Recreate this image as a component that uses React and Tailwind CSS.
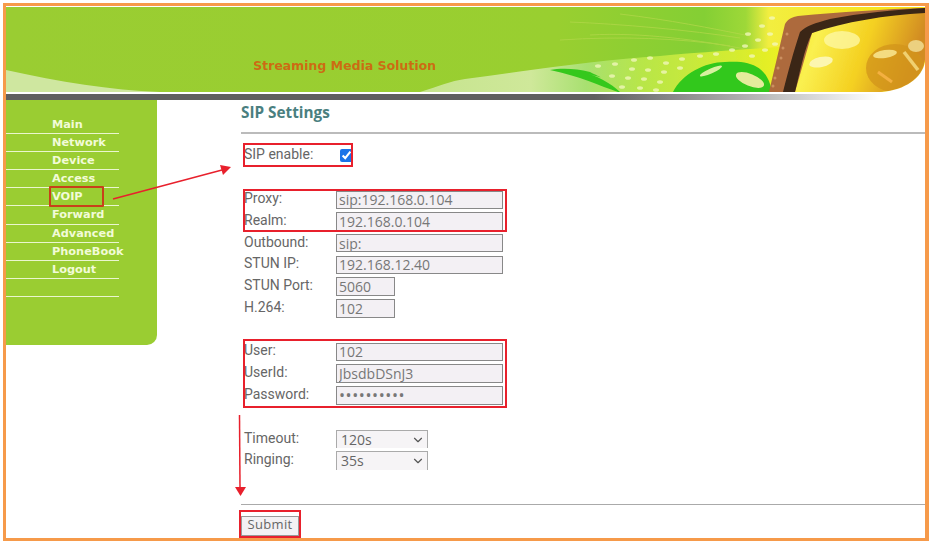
import React from 'react';
import { ChevronDown } from 'lucide-react';

const menuItems = ['Main', 'Network', 'Device', 'Access', 'VOIP', 'Forward', 'Advanced', 'PhoneBook', 'Logout', ''];

const Banner = () => (
  <svg viewBox="6 7 919 85" className="block w-[919px] h-[85px]">
    <defs>
      <linearGradient id="base" x1="0" x2="1" y1="0" y2="0">
        <stop offset="0" stopColor="#9acd32" />
        <stop offset="0.6" stopColor="#99cf30" />
        <stop offset="0.76" stopColor="#84cf34" />
        <stop offset="0.805" stopColor="#9ed838" />
        <stop offset="0.83" stopColor="#f2ee40" />
        <stop offset="1" stopColor="#f8e010" />
      </linearGradient>
      <linearGradient id="swoosh" gradientUnits="userSpaceOnUse" x1="420" x2="790" y1="0" y2="0">
        <stop offset="0" stopColor="#c6e48e" />
        <stop offset="0.3" stopColor="#cfe89a" />
        <stop offset="0.45" stopColor="#a8e070" />
        <stop offset="0.6" stopColor="#b8e648" />
        <stop offset="0.85" stopColor="#d4ec30" />
        <stop offset="1" stopColor="#f0f020" />
      </linearGradient>
      <linearGradient id="lens" x1="0" x2="1" y1="0" y2="0.2">
        <stop offset="0" stopColor="#f6e600" />
        <stop offset="0.3" stopColor="#faf050" />
        <stop offset="0.65" stopColor="#f4d020" />
        <stop offset="1" stopColor="#d28c24" />
      </linearGradient>
      <filter id="soft" x="-5%" y="-5%" width="110%" height="110%">
        <feGaussianBlur stdDeviation="0.7" />
      </filter>
    </defs>
    <rect x="6" y="7" width="919" height="85" fill="url(#base)" />
    <g filter="url(#soft)">
      <g fill="none" stroke="#b4d84c" strokeWidth="1" opacity="0.7">
        <path d="M570 22 C620 24 690 30 740 38" />
        <path d="M590 35 C640 32 700 40 750 50" />
        <path d="M560 40 C620 36 680 38 730 46" />
        <path d="M620 14 C670 20 710 28 750 36" />
      </g>
      {/* light swoosh under the title */}
      <path d="M6 70 C60 82 110 90 160 92 L6 92 Z" fill="#cfe7a0" />
      <path d="M420 92 C440 86 450 81 465 79 C530 70 600 60 660 56 C700 52 740 50 790 46 L790 92 Z" fill="url(#swoosh)" />
      <g fill="#f4f8c0" opacity="0.75">
        {[[598, 66], [615, 64], [634, 60], [650, 58], [666, 63], [682, 59], [700, 56], [716, 54], [632, 69], [648, 70], [664, 72], [680, 68], [612, 76], [628, 78], [644, 79], [660, 82], [640, 88], [622, 87], [656, 90], [732, 50], [745, 46], [758, 40], [770, 34], [752, 56], [765, 50], [762, 26], [772, 18], [748, 34], [775, 44]].map(([cx, cy]) => (
          <ellipse key={`${cx}-${cy}`} cx={cx} cy={cy} rx="3" ry="1.8" />
        ))}
      </g>
      {/* green drops */}
      <path d="M620 92 C612 84 595 74 580 72 C600 76 610 82 590 72 C575 68 560 68 550 70 C580 76 600 86 618 92 Z" fill="#34c81e" />
      <path d="M673 92 C682 74 705 62 725 62 C750 60 768 66 772 92 Z" fill="#30c81a" />
      <ellipse cx="711" cy="71" rx="12" ry="2.5" fill="#d8f0a0" transform="rotate(-24 711 71)" />
      <ellipse cx="750" cy="80" rx="15" ry="6" fill="#e4ec9c" transform="rotate(22 750 80)" />
    </g>
    {/* glasses */}
    <g filter="url(#soft)">
      <path d="M782 92 L805 30 C850 16 890 11 925 10 L925 60 C922 78 905 90 880 92 Z" fill="url(#lens)" />
      <path d="M769 92 L785 24 C788 19 792 17 798 16 C840 12 885 9 925 8 L925 11 C885 13 840 20 812 33 L795 92 Z" fill="#ad6a3c" />
      <path d="M783 92 C788 72 794 50 800 32 C806 26 815 23 830 19 C860 13 895 10 925 8 L925 13 C885 15 845 22 812 33 C804 50 800 72 795 92 Z" fill="#3a2618" />
      <g fill="#d9a070" opacity="0.7">
        {[[783, 48], [781, 58], [778, 68], [775, 78], [773, 86], [787, 34]].map(([cx, cy]) => (
          <circle key={`${cx}-${cy}`} cx={cx} cy={cy} r="1.5" />
        ))}
      </g>
      <ellipse cx="821" cy="62" rx="12" ry="5" fill="#fcf6b0" transform="rotate(-12 821 62)" />
      <ellipse cx="842" cy="40" rx="18" ry="9" fill="#fdf8a8" opacity="0.75" />
      <ellipse cx="895" cy="68" rx="29" ry="24" fill="#d2941e" opacity="0.75" />
      <ellipse cx="885" cy="54" rx="12" ry="4" fill="#f4dc80" transform="rotate(-8 885 54)" />
      <ellipse cx="916" cy="46" rx="8" ry="6" fill="#ecd080" />
      <path d="M904 52 L918 70" stroke="#f0d070" strokeWidth="3.5" />
      <path d="M878 72 L892 82" stroke="#f4b040" strokeWidth="3" />
    </g>
    <path d="M925 62 C922 78 905 90 882 92 L925 92 Z" fill="#ffffff" />
  </svg>
);

const Row = ({ label, value, type = 'text', short = false }) => (
  <div className="flex items-center h-[21.7px] pl-[3px]">
    <span className="w-[92px] pb-[2px] text-[14px] text-[#666] font-['Roboto',sans-serif]">{label}</span>
    <input
      type={type}
      readOnly
      value={value}
      className={`${short ? 'w-[59px]' : 'w-[167px]'} h-[18.5px] border border-[#888] bg-[#f3f0f4] px-[2px] ${type === 'password' ? 'text-[16px] tracking-[0.6px]' : 'text-[14px]'} text-[#777] font-['Open_Sans',sans-serif]`}
    />
  </div>
);

const SelectRow = ({ label, value }) => (
  <div className="flex items-center h-[21.7px] pl-[3px]">
    <span className="w-[92px] pb-[2px] text-[14px] text-[#666] font-['Roboto',sans-serif]">{label}</span>
    <div className="relative w-[92px] h-[18.5px] border border-b-0 border-[#aaa] bg-[#f6f4f6] pl-[4px] text-[14px] leading-[18px] text-[#666]">
      {value}
      <ChevronDown className="absolute right-[2px] top-[2px] w-[14px] h-[14px] text-[#555]" />
    </div>
  </div>
);

const RedBox = ({ className }) => (
  <div className={`absolute border-2 border-[#e8202c] pointer-events-none ${className}`} />
);

export default function App() {
  return (
    <div className="relative w-[930px] h-[544px] bg-white overflow-hidden font-['Open_Sans',sans-serif]">
      <div className="relative ml-[3px] mt-[3px] w-[926px] h-[538px] border-[3px] border-r-4 border-[#f69a4a] flex flex-col overflow-hidden">
        <div className="relative mt-px">
          <Banner />
          <span className="absolute left-[247px] top-[50px] text-[12.5px] leading-[18px] font-bold text-[#cc6a14] font-['DejaVu_Sans',sans-serif]">
            Streaming Media Solution
          </span>
        </div>
        <div className="mt-[2px] h-[6px] bg-gradient-to-r from-[#5f5f5f] from-[64%] to-white to-[95%]" />

        <div className="flex flex-1">
          <aside className="w-[151px] h-[245px] shrink-0 bg-[#9acd32] rounded-br-[10px] pt-[16px]">
            <ul className="w-[113px]">
              {menuItems.map((item, i) => (
                <li key={i} className="h-[18.1px] border-b border-[#eaf6cf] pl-[46px] text-[11.3px] leading-[18px] font-bold text-[#f2fbd8] font-['DejaVu_Sans',sans-serif] whitespace-nowrap">
                  {item}
                </li>
              ))}
            </ul>
          </aside>

          <main className="flex-1 pl-[84px]">
            <h1 className="h-[32px] text-[15.3px] leading-[24px] font-bold text-[#4a7f80]">SIP Settings</h1>
            <div className="h-[2px] bg-[#bbb]" />

            <div className="relative mt-[9px] ml-[2px] h-[24px] w-[110px] flex items-center pl-[1px]">
              <RedBox className="inset-x-0 inset-y-0" />
              <span className="w-[96px] pb-[2px] text-[14px] text-[#666] font-['Roboto',sans-serif]">SIP enable:</span>
              <input type="checkbox" readOnly checked className="m-0 w-[13px] h-[13px] accent-[#1a73e8]" />
            </div>

            <div className="mt-[22px]">
              <div className="relative">
                <RedBox className="left-[2px] top-0 w-[264px] h-[43px]" />
                <Row label="Proxy:" value="sip:192.168.0.104" />
                <Row label="Realm:" value="192.168.0.104" />
              </div>
              <Row label="Outbound:" value="sip:" />
              <Row label="STUN IP:" value="192.168.12.40" />
              <Row label="STUN Port:" value="5060" short />
              <Row label="H.264:" value="102" short />
            </div>

            <div className="relative mt-[22px]">
              <RedBox className="left-[2px] -top-[2px] w-[264px] h-[69px]" />
              <Row label="User:" value="102" />
              <Row label="UserId:" value="JbsdbDSnJ3" />
              <Row label="Password:" value="1234567890" type="password" />
            </div>

            <div className="mt-[22px]">
              <SelectRow label="Timeout:" value="120s" />
              <SelectRow label="Ringing:" value="35s" />
            </div>

            <div className="mt-[32px] h-px bg-[#aaa]" />
            <div className="relative mt-[11px] w-[58px]">
              <RedBox className="-left-[2px] -top-[6px] w-[62px] h-[28px]" />
              <button className="flex items-center justify-center w-[58px] h-[20px] border border-[#999] bg-[#f3f1f3] pb-[2px] text-[13px] tracking-[0.3px] text-[#666]">Submit</button>
            </div>
          </main>
        </div>
      </div>

      {/* annotation arrows and VOIP highlight */}
      <div className="absolute left-[49px] top-[186px] w-[55px] h-[21px] border-2 border-[#c8401a] rounded-[1px]" />
      <svg className="absolute inset-0 w-[930px] h-[544px] pointer-events-none" viewBox="0 0 930 544">
        <path d="M113 199 L222 170" stroke="#e8202c" strokeWidth="1.5" fill="none" />
        <path d="M231 167 L220 165 L223 175 Z" fill="#e8202c" />
        <path d="M239.5 415 L240 488" stroke="#e8202c" strokeWidth="1.5" fill="none" />
        <path d="M235 487 L246 487 L240.5 496 Z" fill="#e8202c" />
      </svg>
    </div>
  );
}
